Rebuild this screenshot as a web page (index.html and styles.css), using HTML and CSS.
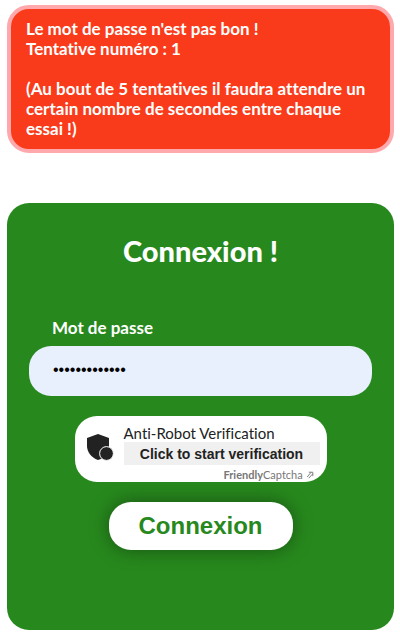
FILE: index.html
```html
<!DOCTYPE html>
<html lang="fr">
<head>
<meta charset="utf-8">
<meta name="viewport" content="width=device-width, initial-scale=1">
<title>Connexion</title>
<link rel="stylesheet" href="styles.css">
</head>
<body>
<main class="page">
  <div class="alert" role="alert">
    <p>Le mot de passe n'est pas bon !<br>Tentative numéro : 1</p>
    <p>(Au bout de 5 tentatives il faudra attendre un certain nombre de secondes entre chaque essai !)</p>
  </div>
  <form class="card">
    <h1 class="title">Connexion !</h1>
    <label class="label" for="password">Mot de passe</label>
    <input class="field" id="password" type="password" value="motdepasse123">
    <div class="captcha">
      <svg class="shield" viewBox="0 0 27 26" aria-hidden="true">
        <path d="M11 0 22 4V13C22 19 17 24.500 11 26C4 23.500 0 17.500 0 12V4Z"/>
        <circle cx="19.500" cy="19.500" r="6.900"/>
      </svg>
      <div class="captcha-body">
        <span class="captcha-title">Anti-Robot Verification</span>
        <button class="captcha-start" type="button">Click to start verification</button>
        <a class="captcha-brand" href="#"><b>Friendly</b>Captcha <svg class="arrow" viewBox="0 0 9 10" aria-hidden="true"><path d="M3 1.500H8V6.500M6 1.500 1 7.500M8 3.500 3 9"/></svg></a>
      </div>
    </div>
    <button class="submit" type="submit">Connexion</button>
  </form>
</main>
</body>
</html>
```
FILE: styles.css
```css
* {
  box-sizing: border-box;
}

body {
  margin: 0;
  background: #fff;
  font-family: Lato, sans-serif;
  font-variant-ligatures: none;
}

.page {
  display: flex;
  flex-direction: column;
  gap: 50px;
  padding: 5px 6px 7px 7px;
}

.alert {
  display: flex;
  flex-direction: column;
  gap: 20px;
  padding: 10px 15px;
  border: 4px solid #ffa9ad;
  border-radius: 22px;
  background: #fa3b1b;
  color: #fff;
  font-size: 17px;
  font-weight: 700;
  line-height: 20px;
}

.alert p {
  margin: 0;
}

.card {
  display: flex;
  flex-direction: column;
  align-items: center;
  padding: 30px 22px 80px;
  border-radius: 22px;
  background: #27891d;
  color: #fff;
}

.title {
  margin: 0 0 49px;
  font-size: 29px;
  font-weight: 900;
  line-height: 36px;
}

.label {
  align-self: stretch;
  margin-bottom: 8px;
  padding-left: 23px;
  font-size: 17px;
  font-weight: 700;
  line-height: 20px;
}

.field {
  width: 100%;
  height: 50px;
  margin: 0 0 20px;
  padding: 0 24px 2px;
  border: 0;
  border-radius: 22px;
  background: #e8f0fe;
  color: #000;
  font-family: "Liberation Sans", Arial, sans-serif;
  font-size: 16px;
}

.captcha {
  display: flex;
  gap: 10px;
  width: 252px;
  height: 66px;
  margin-bottom: 20px;
  padding: 8px 7px 0 12px;
  border-radius: 22px;
  background: #fff;
  color: #222;
}

.shield {
  flex: none;
  width: 27px;
  height: 26px;
  margin-top: 10px;
  fill: #222;
  overflow: visible;
}

.shield circle {
  stroke: #fff;
  stroke-width: 1;
}

.captcha-body {
  display: flex;
  flex: 1;
  flex-direction: column;
}

.captcha-title {
  font-size: 15px;
  line-height: 18px;
}

.captcha-start {
  height: 23px;
  padding: 0;
  border: 0;
  background: #f0f0f0;
  color: #222;
  font: 700 14px "Liberation Sans", Arial, sans-serif;
}

.captcha-brand {
  align-self: flex-end;
  margin-top: 3px;
  margin-right: 6px;
  color: #777;
  font-size: 11px;
  line-height: 14px;
  text-decoration: none;
}

.arrow {
  width: 8px;
  height: 8px;
  fill: none;
  stroke: #666;
  stroke-width: 1;
}

.submit {
  height: 48px;
  padding: 0 30px;
  border: 0;
  border-radius: 22px;
  background: #fff;
  box-shadow: 0 0 20px rgba(0, 0, 0, 0.4);
  color: #27891d;
  font: 700 24px "Liberation Sans", Arial, sans-serif;
}
```
